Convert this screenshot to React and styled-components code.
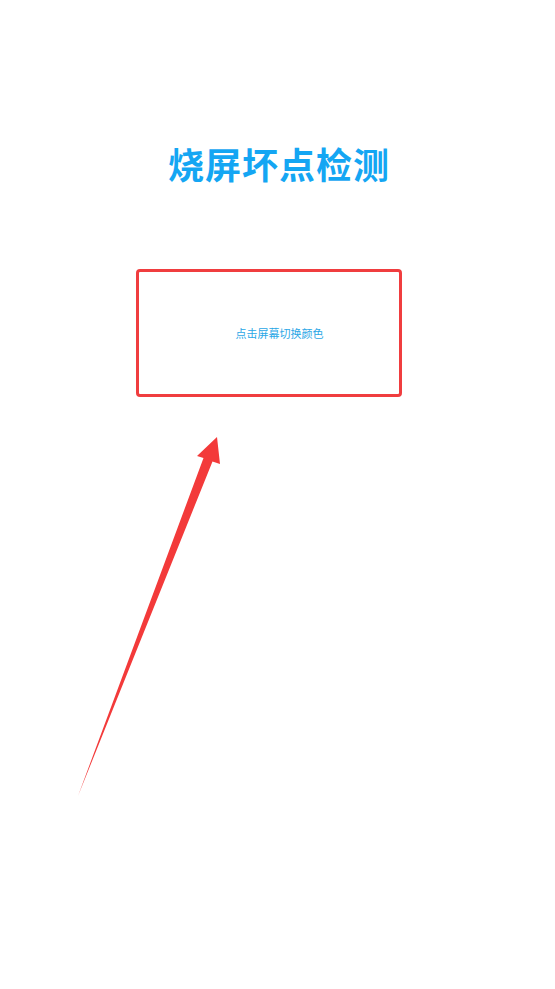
import React from 'react'
import styled, { createGlobalStyle } from 'styled-components'

const Global = createGlobalStyle`
  html, body { margin: 0; padding: 0; background: #ffffff; }
  body { font-family: "Noto Sans CJK SC", "Noto Sans", sans-serif; }
`;

const Page = styled.div`
  position: relative;
  width: 555px;
  height: 989px;
  overflow: hidden;
  display: flex;
  flex-direction: column;
  align-items: center;
  padding-top: 145px;
  box-sizing: border-box;
`;

const Title = styled.h1`
  margin: 0 0 0 3px;
  font-size: 36px;
  line-height: 36px;
  font-weight: 700;
  color: #14a6f3;
  letter-spacing: 1px;
`;

const TapBox = styled.div`
  margin-top: 88px;
  margin-right: 17px;
  width: 266px;
  height: 128px;
  box-sizing: border-box;
  border: 3px solid #f03d3f;
  border-radius: 4px;
  display: flex;
  align-items: center;
  justify-content: center;
  padding-left: 21px;
  cursor: pointer;
`;

const Hint = styled.span`
  font-size: 11px;
  line-height: 14px;
  color: #2aa7e6;
`;

const Arrow = styled.svg`
  position: absolute;
  left: 0;
  top: 0;
  pointer-events: none;
`;

export default function App() {
  return (
    <>
      <Global />
      <Page>
        <Title>烧屏坏点检测</Title>
        <TapBox>
          <Hint>点击屏幕切换颜色</Hint>
        </TapBox>
        <Arrow width="555" height="989" viewBox="0 0 555 989">
          <polygon
            fill="#f33a3a"
            points="217,437 220,464 212.5,461.5 78,796 203.5,458 197,456"
          />
        </Arrow>
      </Page>
    </>
  )
}
